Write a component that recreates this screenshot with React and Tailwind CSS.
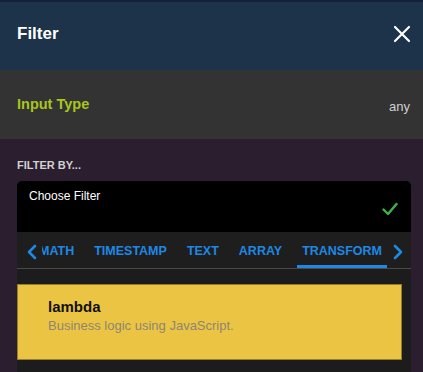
const tabs = ["MATH", "TIMESTAMP", "TEXT", "ARRAY", "TRANSFORM"];

function Chevron({ dir }) {
  return (
    <svg width="10" height="16" viewBox="0 0 10 16" fill="none">
      <path
        d={dir === "left" ? "M8 2L2 8L8 14" : "M2 2L8 8L2 14"}
        stroke="#1e88e5"
        strokeWidth="2.6"
        strokeLinecap="round"
        strokeLinejoin="round"
      />
    </svg>
  );
}

export default function App() {
  return (
    <div
      className="w-[423px] h-[372px] overflow-hidden flex flex-col bg-[#2b1e2f]"
      style={{ fontFamily: '"Liberation Sans", Arial, sans-serif' }}
    >
      <div className="h-[70px] shrink-0 flex items-center justify-between pl-[17px] pr-[10px] pb-[4px] bg-[#1c3349] border-t-2 border-[#13223a]">
        <h1 className="text-[17px] font-bold text-white">Filter</h1>
        <svg width="22" height="22" viewBox="0 0 22 22" fill="none">
          <path d="M4 4L18 18M18 4L4 18" stroke="#ffffff" strokeWidth="2.2" strokeLinecap="round" />
        </svg>
      </div>

      <div className="h-[69px] shrink-0 flex items-center justify-between pr-[13px] pl-[17px] bg-[#333333]">
        <span className="text-[14.5px] font-bold text-[#a8c61c]">Input Type</span>
        <span className="text-[13px] text-[#cfcfcf] pt-[5px]">any</span>
      </div>

      <div className="flex-1 flex flex-col pt-[21px] pl-[17px] pr-[12px]">
        <h2 className="text-[11px] font-bold text-[#d2d2d2] leading-none mb-[10px]">FILTER BY...</h2>

        <div className="flex-1 flex flex-col rounded-t-[5px] bg-[#1c1c1c] overflow-hidden">
          <div className="h-[51px] bg-black flex justify-between pl-[12px] pr-[13px] pt-[9px]">
            <span className="text-[12px] text-white leading-none">Choose Filter</span>
            <svg width="16" height="14" viewBox="0 0 16 14" fill="none" className="mt-[12px]">
              <path d="M1.5 7.5L6 12L14.5 2" stroke="#3cb44b" strokeWidth="2.4" strokeLinecap="round" strokeLinejoin="round" />
            </svg>
          </div>

          <div className="h-[37px] flex items-stretch bg-[#1e1e1e] border-b border-[#4a4a4a]">
            <div className="w-[25px] shrink-0 flex items-center justify-center pl-[4px] pt-[3px]">
              <Chevron dir="left" />
            </div>
            <div className="flex-1 overflow-hidden">
              <div className="flex h-full -ml-[13px]">
                {tabs.map((t) => (
                  <div
                    key={t}
                    className={`shrink-0 mx-[5px] px-[5px] flex items-center text-[12.5px] font-bold text-[#1e88e5] border-b-[3px] ${
                      t === "TRANSFORM" ? "border-[#1e88e5]" : "border-transparent"
                    }`}
                  >
                    <span className="pt-[6px]">{t}</span>
                  </div>
                ))}
              </div>
            </div>
            <div className="w-[24px] shrink-0 flex items-center justify-center pr-[2px] pt-[3px]">
              <Chevron dir="right" />
            </div>
          </div>

          <div className="pt-[15px] pr-[9px]">
            <div className="h-[76px] bg-[#ecc443] border border-[#977f2a] pl-[30px] pt-[12px]">
              <div className="text-[15px] font-bold text-[#111111] leading-[18px] mt-[1px]">lambda</div>
              <div className="text-[13px] text-[#8c8672] leading-[18px] mt-[1px]">
                Business logic using JavaScript.
              </div>
            </div>
          </div>
        </div>
      </div>
    </div>
  );
}
